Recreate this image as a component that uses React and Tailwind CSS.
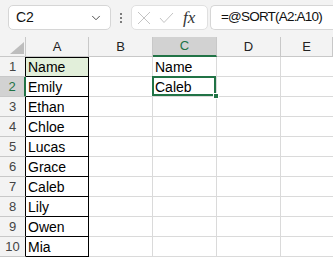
import { ChevronDown } from "lucide-react";

const cols = ["A", "B", "C", "D", "E"];
const names = ["Name", "Emily", "Ethan", "Chloe", "Lucas", "Grace", "Caleb", "Lily", "Owen", "Mia"];

const font = { fontFamily: '"Liberation Sans", Arial, sans-serif' };

const FormulaBar = () => (
  <div className="h-[37px] bg-[#f3f3f3] flex items-start pt-[5px] pl-[8px] gap-0">
    {/* name box */}
    <div className="w-[103px] h-[25px] bg-white border border-[#d6d6d6] rounded-[5px] flex items-center justify-between pl-[7px] pr-[7px]">
      <span className="text-[14px] text-[#111]" style={font}>C2</span>
      <ChevronDown size={14} strokeWidth={1.6} className="text-[#444]" />
    </div>
    {/* dots */}
    <div className="w-[20px] h-[25px] flex flex-col items-center justify-center gap-[2px]">
      <span className="w-[2px] h-[2px] bg-[#555] rounded-full" />
      <span className="w-[2px] h-[2px] bg-[#555] rounded-full" />
      <span className="w-[2px] h-[2px] bg-[#555] rounded-full" />
    </div>
    {/* cancel / enter / fx */}
    <div className="w-[77px] h-[25px] bg-white border border-[#e0e0e0] rounded-[5px] flex items-center pl-[5px]">
      <svg width="14" height="14" viewBox="0 0 14 14">
        <path d="M1 1 L13 13 M13 1 L1 13" stroke="#c4c4c4" strokeWidth="1" fill="none" />
      </svg>
      <svg className="ml-[8px]" width="15" height="14" viewBox="0 0 15 14">
        <path d="M1 7 L5 11.5 L14 2" stroke="#c4c4c4" strokeWidth="1" fill="none" />
      </svg>
      <span
        className="ml-[9px] text-[17px] italic text-[#333] leading-none"
        style={{ fontFamily: '"Liberation Serif", "Times New Roman", serif' }}
      >
        fx
      </span>
    </div>
    {/* formula */}
    <div className="ml-[2px] flex-1 h-[25px] bg-white border border-[#d6d6d6] border-r-0 rounded-l-[5px] flex items-center pl-[10px]">
      <span className="text-[13.5px] tracking-[-0.8px] text-[#111]" style={font}>=@SORT(A2:A10)</span>
    </div>
  </div>
);

const ColHeader = () => (
  <div className="grid grid-cols-[26px_63px_64px_64px_64px_1fr] grid-rows-[20px] h-[20px] bg-[#f3f3f3] leading-[16px]">
    <div className="relative border-r border-b border-[#c8c8c8]">
      <svg className="absolute left-[10px] top-[5px]" width="14" height="12" viewBox="0 0 14 12">
        <polygon points="14,0 14,12 0,12" fill="#bdbdbd" />
      </svg>
    </div>
    {cols.map((c) => {
      const sel = c === "C";
      return (
        <div
          key={c}
          className={
            sel
              ? "flex items-center justify-center bg-[#d2d2d2] border-r border-[#c8c8c8] border-b-2 border-b-[#217346] text-[#217346] text-[13px]"
              : "flex items-center justify-center border-r border-b border-[#c8c8c8] text-[#222] text-[13px]"
          }
          style={font}
        >
          {c}
        </div>
      );
    })}
  </div>
);

const Row = ({ n, name }) => {
  const selRow = n === 2;
  return (
    <div className="grid grid-cols-[26px_63px_64px_64px_64px_1fr] grid-rows-[20px] h-[20px] leading-[17px]">
      <div
        className={
          selRow
            ? "bg-[#d2d2d2] border-b border-[#c8c8c8] border-r-2 border-r-[#217346] flex items-center justify-center text-[13px] text-[#217346]"
            : "bg-[#f3f3f3] border-b border-[#c8c8c8] border-r border-r-black flex items-center justify-center text-[13px] text-[#444]"
        }
        style={font}
      >
        {n}
      </div>
      <div
        className={
          "border-r border-b border-black flex items-end pl-[2px] text-[14px] text-black " +
          (n === 1 ? "bg-[#e2efda] border-t border-t-black" : "bg-white")
        }
        style={font}
      >
        {name}
      </div>
      <div className="bg-white border-r border-b border-[#dadada]" />
      <div className="relative bg-white border-r border-b border-[#dadada] flex items-end pl-[2px] text-[14px] text-black" style={font}>
        {n === 1 && "Name"}
        {n === 2 && (
          <>
            <span className="relative z-10">Caleb</span>
            <div className="absolute -left-[1px] -top-[1px] right-0 bottom-0 border-2 border-[#217346]" />
            <div className="absolute -right-[3px] -bottom-[3px] w-[6px] h-[6px] bg-[#217346] border border-white z-10" />
          </>
        )}
      </div>
      <div className="bg-white border-r border-b border-[#dadada]" />
      <div className="bg-white border-b border-[#dadada]" />
    </div>
  );
};

export default function App() {
  return (
    <div className="w-[333px] h-[258px] overflow-hidden bg-white">
      <FormulaBar />
      <ColHeader />
      {names.map((name, i) => (
        <Row key={i} n={i + 1} name={name} />
      ))}
    </div>
  );
}
